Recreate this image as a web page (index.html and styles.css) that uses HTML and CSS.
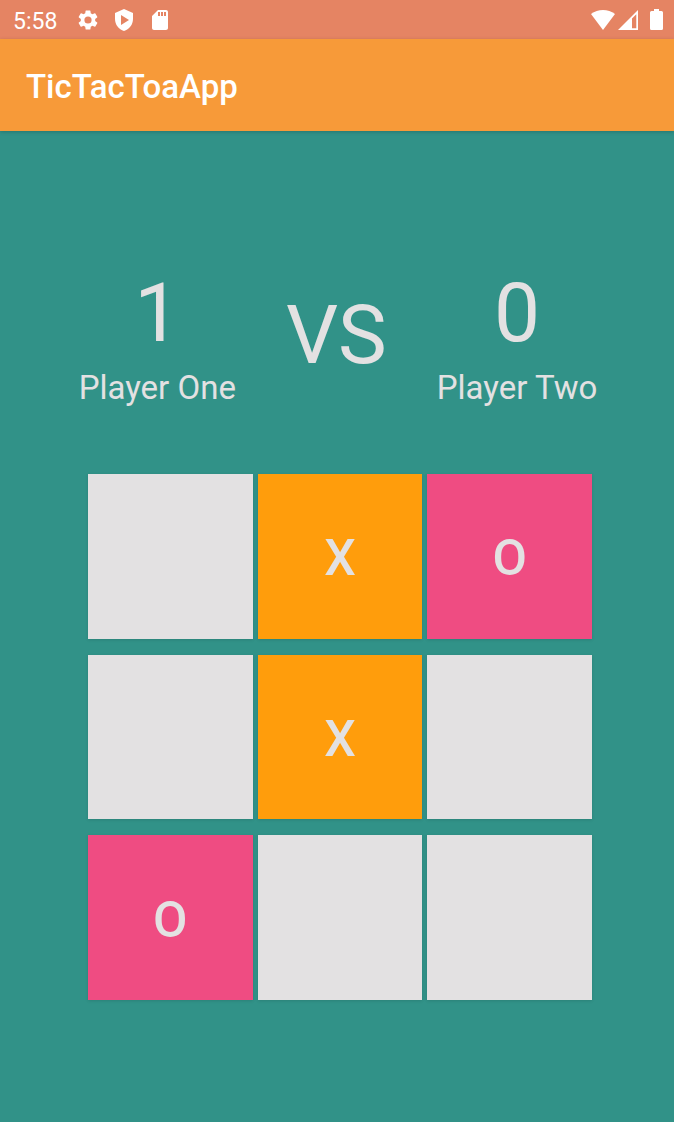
FILE: index.html
```html
<!DOCTYPE html>
<html lang="en">
<head>
<meta charset="utf-8">
<meta name="viewport" content="width=device-width, initial-scale=1">
<title>TicTacToaApp</title>
<link rel="stylesheet" href="styles.css">
</head>
<body>
<div class="status-bar">
  <time class="clock">5:58</time>
  <div class="notifications">
    <svg class="icon" viewBox="0 0 24 24" aria-hidden="true"><path d="M19.14 12.94c.04-.3.06-.61.06-.94 0-.32-.02-.64-.07-.94l2.03-1.58a.49.49 0 0 0 .12-.61l-1.92-3.32a.49.49 0 0 0-.59-.22l-2.39.96a7 7 0 0 0-1.62-.94l-.36-2.54A.48.48 0 0 0 13.920 2.400h-3.840a.48.48 0 0 0-.48.41l-.36 2.540c-.59.24-1.130.57-1.620.94l-2.390-.96a.48.48 0 0 0-.59.22L2.740 8.870a.48.48 0 0 0 .12.61l2.030 1.580c-.05.3-.09.63-.09.94s.02.64.07.94l-2.030 1.580a.49.49 0 0 0-.12.61l1.920 3.320c.12.22.37.29.59.22l2.390-.96c.5.38 1.030.7 1.620.94l.36 2.540c.05.24.24.41.48.41h3.840c.24 0 .44-.17.47-.41l.36-2.540a7 7 0 0 0 1.620-.94l2.390.96c.22.08.47 0 .59-.22l1.920-3.320a.48.48 0 0 0-.12-.61zM12 15.600a3.600 3.600 0 1 1 0-7.200 3.600 3.600 0 0 1 0 7.200z"/></svg>
    <svg class="icon" viewBox="0 0 24 24" aria-hidden="true"><path fill-rule="evenodd" d="M12 1 3 5v6c0 5.550 3.840 10.740 9 12 5.160-1.260 9-6.450 9-12V5zM9 7l8 5-8 5z"/></svg>
    <svg class="icon" viewBox="0 0 24 24" aria-hidden="true"><path fill-rule="evenodd" d="M18 2h-8L4 8v12c0 1.100.9 2 2 2h12c1.100 0 2-.9 2-2V4c0-1.100-.9-2-2-2zM10 4h2v4h-2zM13 4h2v4h-2zM16 4h2v4h-2z"/></svg>
  </div>
  <div class="system">
    <svg class="wifi" viewBox="0 0 24 20" aria-hidden="true"><path d="M0 4C7-1.300 17-1.300 24 4L12 20z"/></svg>
    <svg class="signal" viewBox="0 0 20 20" aria-hidden="true"><path fill-rule="evenodd" d="M0 20 20 0v20zM14 8.500V18.300h4.300V4.200z"/></svg>
    <svg class="battery" viewBox="0 0 13 21" aria-hidden="true"><path d="M4 0h5v2h2.500Q13 2 13 3.500v16Q13 21 11.500 21h-10Q0 21 0 19.500v-16Q0 2 1.500 2H4z"/></svg>
  </div>
</div>
<header class="app-bar"><h1 class="app-title">TicTacToaApp</h1></header>
<main class="game">
  <section class="scoreboard" aria-label="Score">
    <div class="player"><span class="score">1</span><span class="name">Player One</span></div>
    <span class="score versus">VS</span>
    <div class="player"><span class="score">0</span><span class="name">Player Two</span></div>
  </section>
  <section class="board" aria-label="Board">
    <button class="cell" type="button" aria-label="Empty"></button>
    <button class="cell cell-x" type="button">X</button>
    <button class="cell cell-o" type="button">O</button>
    <button class="cell" type="button" aria-label="Empty"></button>
    <button class="cell cell-x" type="button">X</button>
    <button class="cell" type="button" aria-label="Empty"></button>
    <button class="cell cell-o" type="button">O</button>
    <button class="cell" type="button" aria-label="Empty"></button>
    <button class="cell" type="button" aria-label="Empty"></button>
  </section>
</main>
</body>
</html>
```

FILE: styles.css
```css
* { box-sizing: border-box; }

body {
  margin: 0;
  min-height: 100vh;
  background: #319288;
  color: #e3e1e2;
  font-family: Roboto, "Liberation Sans", sans-serif;
}

.status-bar {
  display: flex;
  align-items: center;
  height: 39px;
  padding: 0 11px 0 13px;
  background: #e58463;
  color: #fff;
}

.status-bar svg { display: block; fill: currentColor; }

.clock { font-size: 23px; line-height: 27px; padding-top: 3px; }

.notifications {
  display: flex;
  gap: 12px;
  margin-left: 19px;
}

.icon { width: 24px; height: 24px; }

.system {
  display: flex;
  align-items: center;
  margin-left: auto;
}

.wifi { width: 24px; height: 20px; margin-right: 3px; }
.signal { width: 20px; height: 20px; margin-right: 12px; }
.battery { width: 13px; height: 21px; }

.app-bar {
  display: flex;
  align-items: center;
  height: 92px;
  padding: 4px 26px 0;
  background: #f79a39;
  box-shadow: 0 1px 4px rgba(0, 0, 0, 0.2);
  color: #fff;
}

.app-title {
  margin: 0;
  font-size: 33px;
  font-weight: 500;
  line-height: 38px;
}

.game { padding: 134px 82px 120px 88px; }

.scoreboard {
  display: flex;
  justify-content: center;
  align-items: flex-start;
  gap: 50px;
  margin: 0 -8px 0 -12px;
}

.player {
  display: flex;
  flex-direction: column;
  align-items: center;
  gap: 8px;
}

.score { font-size: 82px; line-height: 96px; }
.versus { margin-top: 22px; }
.name { font-size: 33px; line-height: 38px; white-space: nowrap; }

.board {
  display: grid;
  grid-template-columns: repeat(3, 1fr);
  gap: 16px 5px;
  margin-top: 67px;
}

.cell {
  aspect-ratio: 1;
  min-width: 0;
  padding: 4px 0 0;
  border: 0;
  background: #e3e1e2;
  box-shadow: 0 1px 3px rgba(0, 0, 0, 0.12);
  color: #e3e1e2;
  font: 500 50px/58px Roboto, "Liberation Sans", sans-serif;
  cursor: pointer;
}

.cell-x { background: #ff9d0c; }
.cell-o { background: #ef4c82; }
```
